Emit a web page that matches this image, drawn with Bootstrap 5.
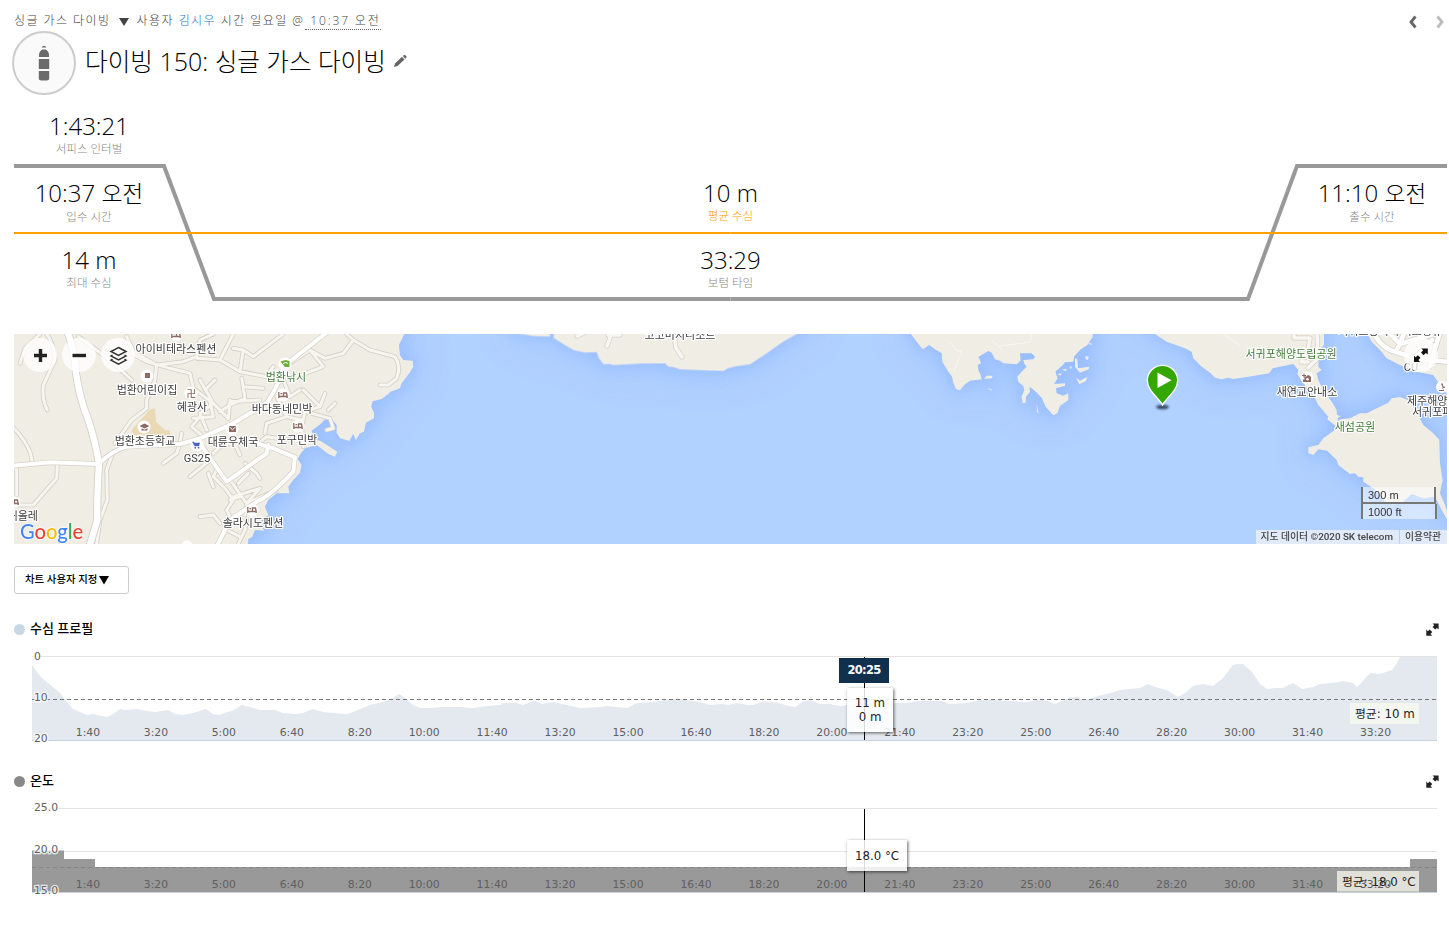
<!DOCTYPE html>
<html lang="ko">
<head>
  <meta charset="UTF-8" />
  <meta name="viewport" content="width=device-width, initial-scale=1.0" />
  <title>다이빙 150: 싱글 가스 다이빙</title>
  <link href="https://cdn.jsdelivr.net/npm/bootstrap@5.3.2/dist/css/bootstrap.min.css" rel="stylesheet" />
  <style>
    body {
      font-family: "Open Sans", "Noto Sans CJK KR", sans-serif;
      color: #000;
      background: #fff;
      overflow: hidden;
    }

    svg { display: block; }

    .page { padding: 10px 2px 0 14px; }

    /* header */
    .page-head { height: 20px; }
    .crumbs {
      height: 20px;
      line-height: 22px;
      font-size: 12px;
      font-weight: 300;
      letter-spacing: 1.45px;
      color: #444;
      white-space: nowrap;
    }
    .crumbs a { color: #1976d2; text-decoration: none; }
    .crumb-at { margin-right: 1px; }
    .crumb-time { border-bottom: 1px dotted #666; line-height: 21px; padding-left: 5px; letter-spacing: 1.85px; }

    .title-row { height: 66px; margin-left: -2px; padding-top: 1px; }
    .dive-icon {
      width: 64px;
      height: 64px;
      border: 2px solid #ccc;
      border-radius: 50%;
      background: #fafafa;
    }
    .dive-title { font-size: 25px; font-weight: 300; line-height: 60px; margin: 0 0 0 9px; white-space: nowrap; }
    .dive-title .ko { font-size: 24.6px; }
    .num { font-weight: 350; }

    /* dive summary */
    .profile { height: 201px; margin-top: 10px; }
    .profile-grid {
      display: grid;
      grid-template-columns: 150px 1fr 150px;
      grid-template-rows: repeat(3, 67px);
      height: 100%;
    }
    .stat { text-align: center; padding-top: 4px; }
    .stat-value { font-size: 24px; font-weight: 350; line-height: 32px; }
    .stat-value .ko { font-size: 22.8px; font-weight: 300; }
    .stat-label { font-size: 11.5px; font-weight: 300; line-height: 13px; color: #888; }
    .stat-label.avg { color: #ff9800; }

    /* map */
    .dive-map { height: 210px; margin-top: 27px; overflow: hidden; }
    .map-btn {
      width: 34px;
      height: 34px;
      top: 4px;
      border: 0;
      padding: 0;
      border-radius: 50%;
      background: rgba(255, 255, 255, .76);
    }
    .zoom-in { left: 9px; }
    .zoom-out { left: 48px; }
    .layers { left: 87px; }
    .map-full { left: 1390px; }
    .map-label text {
      font-family: Roboto, "Noto Sans CJK KR", sans-serif;
      font-size: 11px;
      text-anchor: middle;
      fill: #3c3c3c;
      stroke: #fff;
      stroke-width: 2.4px;
      stroke-linejoin: round;
      paint-order: stroke;
    }
    .map-label .park { fill: #3f7a35; }
    .map-label .from-left { text-anchor: start; }
    .map-label .from-right { text-anchor: end; }
    .temple { font: 500 9.5px "Noto Sans CJK KR", sans-serif; fill: #8d6b63; text-anchor: middle; }
    .google-logo {
      left: 6px;
      top: 187px;
      font: 500 20.2px/20px Lato, sans-serif;
      letter-spacing: -.1px;
      text-shadow: 0 0 2px #fff, 0 0 2px #fff, 0 0 2px #fff;
    }
    .logo-blue { color: #4285f4; }
    .logo-red { color: #ea4335; }
    .logo-yellow { color: #fbbc05; }
    .logo-green { color: #34a853; }
    .scale-bar {
      left: 1347px;
      top: 153px;
      width: 76px;
      font: 11px/17px "Liberation Sans", sans-serif;
      color: #333;
    }
    .scale-bar div {
      height: 17px;
      padding-left: 5px;
      background: rgba(255, 255, 255, .5);
      border: 2px solid #777;
      border-top: 0;
    }
    .scale-bar div:first-child { width: 75px; }
    .scale-bar div:last-child { height: 15px; border-bottom: 0; }
    .map-credit {
      right: 0;
      bottom: 0;
      height: 14px;
      font: 500 9.8px/14px Roboto, "Noto Sans CJK KR", sans-serif;
      color: #444;
      background: rgba(245, 245, 245, .7);
      white-space: nowrap;
    }
    .map-credit span { padding: 0 6px 0 5px; }
    .map-credit span + span { border-left: 1px solid #b3d1ff; }

    /* charts */
    .btn-customize {
      width: 115px;
      height: 28px;
      margin-top: 22px;
      padding: 0 0 0 10px;
      border: 1px solid #ccc;
      border-radius: 3px;
      font-size: 10.4px;
      font-weight: 500;
      color: #000;
      text-align: left;
      white-space: nowrap;
    }
    .caret-icon { margin-left: 2px; }
    .chart-head { height: 20px; padding-right: 8px; font-size: 13px; font-weight: 500; }
    .depth-head { margin-top: 25px; }
    .temp-head { margin-top: 21px; }
    .dot { width: 11px; height: 11px; border-radius: 50%; margin-right: 5px; }
    .dot-depth { background: #c7d8e4; }
    .dot-temp { background: #888; }
    .plot { height: 100px; margin-top: 11px; }
    .plot text { font: 10.8px "DejaVu Sans", sans-serif; fill: #606060; }
    .plot .x-axis text { text-anchor: middle; }
    .plot .y-axis text { stroke: #fff; stroke-opacity: .8; stroke-width: 2.5px; paint-order: stroke; }
    .plot .avg-text { font: 11.8px "DejaVu Sans", "Noto Sans CJK KR", sans-serif; fill: #222; }
    .avg-box { fill: #fafaf0; fill-opacity: .75; }
    .plot-tip, .time-tip {
      font: 11.8px/14px "DejaVu Sans", "Noto Sans CJK KR", sans-serif;
      text-align: center;
      white-space: nowrap;
      color: #222;
    }
    .plot-tip { left: 833px; background: rgba(255, 255, 255, .85); box-shadow: 1px 1px 3px rgba(0, 0, 0, .6); }
    .depth-tip { top: 38px; width: 46px; height: 44px; padding-top: 8px; }
    .temp-tip { top: 38px; width: 60px; height: 31px; line-height: 32px; }
    .time-tip {
      left: 825px;
      top: 8px;
      width: 50px;
      height: 25px;
      line-height: 25px;
      font-size: 11.5px;
      font-weight: bold;
      letter-spacing: -.7px;
      color: #fff;
      background: #10304d;
    }
  </style>
</head>
<body>

  <div class="page">
    <header class="page-head d-flex justify-content-between">
      <div class="crumbs d-flex">
        <span>싱글 가스 다이빙</span>
        <svg width="10" height="20" class="ms-2 me-2"><path d="M0 8h10L5 16z" fill="#444" /></svg>
        <span class="crumb-at">사용자 <a href="#">김시우</a> 시간 일요일 @</span><span class="crumb-time">10:37 오전</span>
      </div>
      <svg width="40" height="24" fill="none" stroke-width="2.8">
        <path d="M8.5 6.5 4 12l4.5 5.5" stroke="#666" />
        <path d="M30.5 6.5 35 12l-4.5 5.5" stroke="#bbb" />
      </svg>
    </header>

    <div class="title-row d-flex">
      <div class="dive-icon">
        <svg width="60" height="60" fill="#6b6b6b">
          <path d="M27.500 14.500q2.500-3.500 5 0zM25 24v-2q0-4 3.500-5.500h3q3.500 1.500 3.500 5.500V24zM24.800 26h10.400v10H24.800zM24.800 38h10.400v7q0 2.500-2.500 2.500h-5.400Q24.800 47.500 24.800 45z" />
        </svg>
      </div>
      <h1 class="dive-title"><span class="ko">다이빙</span> <span class="num">150:</span> <span class="ko">싱글 가스 다이빙</span></h1>
      <svg width="14" height="60" class="ms-2" fill="#666">
        <path d="M0 36 1 32.500 8 25.800 10.500 28.600 3.500 35zM8.800 25 10 24q1-.4 2 .8t.3 1.900L11.300 27.800z" />
      </svg>
    </div>

    <section class="profile position-relative">
      <svg class="position-absolute top-0 start-0" width="1433" height="201" viewBox="14 106 1433 201" fill="none">
        <path d="M14 166H164L214 299H1248L1297 166H1447" stroke="#999" stroke-width="4" />
        <path d="M14 233H1447" stroke="#ff9f00" stroke-width="2" />
        <path d="M730.500 232v2M730.500 297v4" stroke="#fff" stroke-opacity=".3" />
      </svg>
      <div class="profile-grid position-relative">
        <div class="stat">
          <div class="stat-value">1:43:21</div>
          <div class="stat-label">서피스 인터벌</div>
        </div>
        <div></div>
        <div></div>
        <div class="stat">
          <div class="stat-value">10:37 <span class="ko">오전</span></div>
          <div class="stat-label">입수 시간</div>
        </div>
        <div class="stat">
          <div class="stat-value">10 m</div>
          <div class="stat-label avg">평균 수심</div>
        </div>
        <div class="stat">
          <div class="stat-value">11:10 <span class="ko">오전</span></div>
          <div class="stat-label">출수 시간</div>
        </div>
        <div class="stat">
          <div class="stat-value">14 m</div>
          <div class="stat-label">최대 수심</div>
        </div>
        <div class="stat">
          <div class="stat-value">33:29</div>
          <div class="stat-label">보텀 타임</div>
        </div>
      </div>
    </section>

    <section class="dive-map position-relative">
      <svg width="1433" height="210" viewBox="14 334 1433 210">
        <defs>
          <filter id="shallow" x="-10%" y="-50%" width="120%" height="200%"><feGaussianBlur stdDeviation="20" /></filter>
          <filter id="near" x="-10%" y="-50%" width="120%" height="200%"><feGaussianBlur stdDeviation="7" /></filter>
          <filter id="soft" x="-30%" y="-80%" width="160%" height="260%"><feGaussianBlur stdDeviation=".8" /></filter>
          <g id="land">
            <path transform="translate(0 330) scale(.3333)" d="M0-60H1240L1213 12 1197 45 1200 75 1210 90 1238 92 1240 110 1228 130 1205 160 1200 175 1172 185 1165 192 1145 207 1118 214 1114 230 1122 248 1122 265 1098 278 1092 305 1080 310 1068 330 1060 312 1048 333 1020 325 1010 308 1010 285 1000 272 975 268 962 282 935 302 940 318 950 330 962 333 1012 365 1005 380 985 372 950 345 915 355 903 370 893 388 905 405 900 428 880 450 865 470 868 490 830 490 805 510 795 530 805 555 780 575 792 602 765 600 757 620 745 628 738 720H0z" />
            <path transform="translate(400 330) scale(.3333)" d="M340-20V8L400 18 450 20V-20zM461-20V24L490 42 520 60 555 68 590 66 597 85 610 102 630 102 640 105 720 101 795 100 805 110 820 111 840 118 900 120 970 123 985 114 1010 108 1050 103 1100 70 1150 35 1190 12 1240-20z" />
            <path transform="translate(880 330) scale(.3333)" d="M75-20 93 12 110 35 128 58 148 45 165 58 185 70 187 95 205 125 216 140 220 158 228 177 240 181 255 163 270 152 305 148 302 135 295 120 293 105 303 100 296 80 325 63 335 68 345 88 360 92 370 100 410 103 422 92 420 70 455 70 465 80 460 88 430 90 432 100 440 110 425 125 412 140 415 155 430 168 433 180 425 200 428 220 437 218 438 200 450 185 448 170 462 180 485 203 497 230 520 256 532 250 540 228 565 210 565 190 550 197 530 190 528 175 555 167 555 160 522 162 533 145 526 125 548 106 555 97 580 95 582 80 600 60 622 45 638 20 640-20z" />
            <path transform="translate(880 330) scale(.3333)" d="M312 147 320 137 338 137 335 145zM322 175 335 178 335 182zM470 220 476 252 471 245zM585 85 592 88 594 115 628 110 626 118 600 128 585 110zM588 143 600 152 622 140 618 153 598 163zM533 132 545 130 542 137zM545 119 560 116 558 123zM617 78 626 80 624 90 617 88zM568 108 576 112 572 117zM622 36 637 42 632 45z" />
            <path transform="translate(1190 330) scale(.3333)" d="M-160-20-105 12-70 35-15 55 5 65 10 85 35 110 60 128 75 143 95 148 115 143 130 147 190 138 238 130 248 115 280 108 310 102 325 120 322 132 340 160 370 195 385 225 415 260 412 268 437 288 445 280 443 265 452 258 441 255 440 240 425 215 400 180 385 150 380 130 395 120 385 110 388 60 402 45V-20z" />
            <path transform="translate(1190 330) scale(.3333)" d="M437 290 450 268 480 265 510 250 530 250 560 235 595 218 605 205 630 201 660 212 680 250 700 285 730 310 748 330 750 400 758 450 750 490 765 525 790 600 755 540 735 500 700 505 665 492 640 515 610 524 585 515 550 475 520 455 520 442 505 440 495 430 480 432 445 405 440 390 412 362 385 358 370 375 355 370 355 352 385 345 400 325 437 298zM515-20 545 35 570 60 590 85 640 110 680 125 730 135 760 180 800 220V-20z" />
          </g>
          <g id="streets">
            <path d="M42 295Q75 330 90 365L98 400M42 410 50 420V495M172 405 170 445 100 525H50M140 12Q162 40 165 90L130 165Q125 210 142 240" />
            <path d="M60 100 75 55 120 12M230 40 205 50M235 20 330 90 395 150M470 105 465 150 440 210 440 235 395 270 345 340M470 105 400 65 380 20M470 105 550 95 590 80 600 30 640 12M395 70 440 95 510 115 570 130 580 175 640 220 685 265" />
            <path d="M590 85 660 90 700 12M660 90 720 125 730 60 760 80 850 12M730 60 700 55M720 125 800 140 820 110M725 145 735 205 690 225 660 245M790 175 730 170M780 210 690 215M690 210 685 265M640 220 600 250 620 300M640 220 600 150M615 180 645 150M580 265 640 260 630 215" />
            <path d="M870 100 930 60 975 85 1030 70 1060 30 1040 12M1060 30 1110 60 1185 80Q1205 110 1190 145L1165 165 1140 165M905 135 970 110 930 60M910 180 960 230 915 245 990 265 1000 295 980 300M960 230 975 190M985 240 1005 220M915 245 905 290 910 350M850 150 870 200 900 180M830 200 860 260 800 280 795 310M860 260 905 270" />
            <path d="M545 310 540 340 530 370 490 400M610 320 575 290 600 260M625 395 570 440M640 370 660 350 690 340M625 430 640 470M650 420 640 440 675 475 700 510 680 540 690 560M720 375 700 330M735 400 770 430 780 445M690 450 740 520 830 480M745 430 715 460M700 500 780 475 740 520 735 555M690 510 720 500M770 345 800 320 870 330M600 560 640 555 660 580M680 600 720 620M735 600 740 570" />
            <path d="M340 365 320 420 322 510 300 570 290 642M735 600 715 642" />
          </g>
          <path id="highway" d="M200 0Q225 60 228 130 240 210 265 270 285 330 297 400 290 520 292 570L265 660" />
          <path id="mainroad" d="M30 408 150 397 295 402Q340 360 380 350L540 342 600 325 700 280 800 220Q840 160 850 110L990 0M600 340 680 455 800 370 805 345M740 330 820 355 885 382 880 425Q810 500 770 515L690 570 645 660" />
          <path id="lanes" d="M612 332 607 346M608 335 620 335M577 336 586 332M674 336 676 348 682 357M1308 362 1301 362 1308 350 1310 338H1294V332M1317 332 1318 358 1308 368" />
          <path id="harbour" d="M1372 330Q1380 348 1396 352L1415 358 1449 362M1396 352 1404 334M1388 332 1400 344 1440 332M1440 332 1430 366M1415 358 1432 340" />
          <path id="bed" d="M-4.200-3V3M-4.200 1.500H4.200V3M-2.500-1.300H-.800M.500 1V-2H3.500L4.200 1.500" />
        </defs>

        <rect x="14" y="334" width="1433" height="210" fill="#b1d1ff" />
        <use href="#land" fill="#86aeff" stroke="#86aeff" stroke-width="24" filter="url(#shallow)" opacity=".24" />
        <use href="#land" fill="#86aeff" stroke="#86aeff" stroke-width="24" filter="url(#near)" opacity=".4" />
        <use href="#land" fill="#f0ede5" />

        <!-- school ground -->
        <path transform="translate(0 330) scale(.3333)" fill="#ead9b5" d="M450 238 465 235 468 275 495 300 510 302V318L400 315 395 300z" />

        <!-- streets: grey casing under a pale fill -->
        <g transform="translate(0 330) scale(.3333)" fill="none" stroke-linecap="round" stroke-linejoin="round">
          <use href="#streets" stroke="#d5d0c6" stroke-width="14" />
          <use href="#streets" stroke="#f7f5f0" stroke-width="9" />
          <use href="#highway" stroke="#d5d0c6" stroke-width="24" />
          <use href="#mainroad" stroke="#d5d0c6" stroke-width="16" />
          <use href="#highway" stroke="#fff" stroke-width="19" />
          <use href="#mainroad" stroke="#fff" stroke-width="12" />
        </g>
        <g fill="none" stroke-linecap="round" stroke-linejoin="round">
          <use href="#lanes" stroke="#d5d0c6" stroke-width="5" />
          <use href="#lanes" stroke="#f8f6f2" stroke-width="3.6" />
          <use href="#harbour" stroke="#d5d0c6" stroke-width="6" />
          <use href="#harbour" stroke="#fff" stroke-width="4.5" />
          <path stroke="#f8f6f2" d="M1220 332 1240 345M950 342 956 350 962 352 958 360 954 370M992 340 1002 350M1000 346 1030 342 1032 334" />
        </g>

        <!-- places -->
        <g fill="#fff">
          <circle cx="176" cy="335" r="6" /><circle cx="147" cy="376" r="6.5" /><circle cx="191" cy="393" r="6.5" />
          <circle cx="285" cy="364" r="6.5" /><circle cx="283" cy="395" r="6.5" /><circle cx="298" cy="426" r="6.5" />
          <circle cx="144" cy="427" r="6.5" /><circle cx="232" cy="429" r="6.5" /><circle cx="197" cy="445" r="6.5" />
          <circle cx="252" cy="510" r="6.5" /><circle cx="15" cy="502" r="5.5" /><circle cx="187" cy="546" r="5.5" />
          <circle cx="1307" cy="378" r="6.5" /><circle cx="1442" cy="387" r="6" />
        </g>
        <g fill="none" stroke="#8d6b63" stroke-width="1.3">
          <use href="#bed" x="176" y="335" /><use href="#bed" x="283" y="395" /><use href="#bed" x="298" y="426" />
          <use href="#bed" x="252" y="510" /><use href="#bed" x="14" y="502" />
        </g>
        <text x="191.300" y="397" class="temple">卍</text>
        <g fill="#8d6b63">
          <path d="M145 373h5v5h-5zM229 426h7v6h-7z" />
          <path d="M139.500 426 144.500 423.500 149.500 426 144.500 428.500zM141.500 428.200 144.500 429.700 147.500 428.200V430.500H141.500z" />
          <path d="M1304.500 376.500 1306.500 376.500 1307.500 375.300H1309.500L1310 376.500H1311V382H1303V379.500H1304.500zM1302 375h4v1h-4zM1303.500 373.500h1v4h-1z" />
          <path d="M1441 383.500h2v3h2v1.500h-3l2 3M1439 390h5v1h-5z" />
        </g>
        <circle cx="1307.500" cy="379.200" r="1.300" fill="#fff" />
        <path d="M229.500 427 232.500 429.700 235.500 427" stroke="#fff" fill="none" />
        <path d="M192 441.800h1.700l.8 1h5.500l-1 3.400h-4.300zM194.500 447h1.500v1.500h-1.500zM197.800 447h1.500v1.500h-1.500z" fill="#4a63c4" />
        <path d="M280.500 361.500 285.500 360 289.500 361V367H285L282 363.500z" fill="#6fae3c" />
        <path d="M283 363.500q3-2 5 0" stroke="#fff" fill="none" />

        <g class="map-label">
          <text x="176" y="353">아이비테라스펜션</text>
          <text x="147" y="394">법환어린이집</text>
          <text x="192" y="411">혜광사</text>
          <text x="286" y="381" class="park">법환낚시</text>
          <text x="282" y="413">바다동네민박</text>
          <text x="297" y="444">포구민박</text>
          <text x="145" y="445">법환초등학교</text>
          <text x="233" y="446">대륜우체국</text>
          <text x="197" y="462">GS25</text>
          <text x="253" y="527">솔라시도펜션</text>
          <text x="38" y="519.500" class="from-right">귀올레</text>
          <text x="680" y="339">코코미지니조트</text>
          <text x="1291" y="358" class="park">서귀포해양도립공원</text>
          <text x="1307" y="396">새연교안내소</text>
          <text x="1355" y="431" class="park">새섬공원</text>
          <text x="1390" y="335">서귀포항여객 버스정류</text>
          <text x="1411" y="371">CU</text>
          <text x="1407" y="405" class="from-left">제주해양</text>
          <text x="1412" y="416" class="from-left">서귀포파</text>
        </g>

        <!-- entry marker -->
        <ellipse cx="1162.500" cy="407" rx="6.300" ry="2.300" fill="#3a4c66" filter="url(#soft)" />
        <path d="M1162.500 405C1159 398 1147.300 391 1147.300 380.500A15.200 15.200 0 0 1 1177.700 380.500C1177.700 391 1166 398 1162.500 405z" fill="#34a800" stroke="#fff" stroke-width="1.400" />
        <path d="M1157.500 372.500V388L1171.500 380.300z" fill="#fff" />
      </svg>

      <button class="map-btn zoom-in position-absolute" aria-label="확대">
        <svg width="34" height="34"><path d="M11 17.500H24M17.500 11V24" stroke="#222" stroke-width="3.4" /></svg>
      </button>
      <button class="map-btn zoom-out position-absolute" aria-label="축소">
        <svg width="34" height="34"><path d="M10.500 17.500H24" stroke="#222" stroke-width="3.4" /></svg>
      </button>
      <button class="map-btn layers position-absolute" aria-label="레이어">
        <svg width="34" height="34" fill="none" stroke="#333" stroke-width="1.5">
          <path d="M17.500 9.500 25 13.500 17.500 17.500 10 13.500zM11.500 17 10 18l7.500 4L25 18l-1.500-1M11.500 21.200 10 22.200l7.500 4 7.500-4-1.500-1" />
        </svg>
      </button>
      <button class="map-btn map-full position-absolute" aria-label="전체 화면">
        <svg width="34" height="34" fill="#111">
          <path d="M17.200 10.500H23.800V16.500L21.800 15 19.600 17.200 17 14.500 19.200 12.300zM10 17.800 11.700 19.300 13.800 17.200 16.500 19.800 14.400 22 16 24H10z" />
        </svg>
      </button>

      <div class="google-logo position-absolute"><span class="logo-blue">G</span><span class="logo-red">o</span><span class="logo-yellow">o</span><span class="logo-blue">g</span><span class="logo-green">l</span><span class="logo-red">e</span></div>

      <div class="scale-bar position-absolute">
        <div>300 m</div>
        <div>1000 ft</div>
      </div>
      <div class="map-credit position-absolute d-flex"><span>지도 데이터 ©2020 SK telecom</span><span>이용약관</span></div>
    </section>

    <button class="btn btn-customize d-flex align-items-center">
      차트 사용자 지정
      <svg width="10" height="10" class="caret-icon"><path d="M0 1h10L5 9.500z" /></svg>
    </button>

    <div class="chart-head depth-head d-flex align-items-center">
      <span class="dot dot-depth"></span>수심 프로필
      <svg width="13" height="13" class="ms-auto" fill="#222"><path d="M6.500 .500H12.600V6.400L10.900 4.900 9.200 6.600 6.500 4 8.300 2.300zM.300 6.600 1.900 8.200 3.600 6.400 6.300 9 4.500 10.900 6.300 12.700H.300z" /></svg>
    </div>
    <div class="plot position-relative">
      <svg width="1433" height="100" viewBox="14 650 1433 100">
        <path d="M32 656.500H1437" stroke="#e3e3e3" />
        <path fill="#e3e9ef" d="M32 740V665L37 672 42 678 48 683 53 687 60 693 67 702 73 709 80 712 87 715 93 714 107 717 113 714 120 709 125 710 137 709 147 711 155 712 168 710 175 714 183 715 193 713 206 709 213 714 219 715 227 712 232 711 242 705 250 707 260 710 275 710 283 713 295 714 303 713 313 709 323 712 333 713 348 714 358 710 370 705 383 702 393 698 399 694 405 698 413 705 420 708 430 708 443 707 460 707 473 708 487 706 500 705 503 703 515 702.500 523 705 535 700.500 542 704 553 702 567 705 580 708 600 707 607 706 627 708 637 703 653 702 667 700 677 698.500 687 700 700 702 710 705 722 704 728 705 737 703 747 705 753 705 763 701.500 777 702.500 787 705.500 795 707 803 701.500 810 700 820 704 830 704 840 706 847 705 865 703 893 703 907 703 917 701 942 701 950 704 967 703 980 700 993 699.500 1008 701 1027 702 1037 700 1043 699 1055 704 1062 701 1070 697.500 1078 696.500 1082 700 1090 699 1100 695.500 1110 693 1120 690 1130 689 1140 688 1148 684 1155 687 1167 690 1178 697 1185 693 1193 686 1203 684 1213 686 1223 678 1233 665 1238 664 1243 664 1252 672 1260 684 1267 689 1275 688 1283 688 1293 683 1302 689 1313 687 1320 684 1333 683 1343 681 1353 683 1357 687 1362 682 1370 673 1380 674 1392 670 1397 663 1400 657H1437V740z" />
        <path d="M32 740.500H1437" stroke="#c5d3e4" />
        <path d="M32 699.500H1437" stroke="#777" stroke-dasharray="4 3" />
        <rect x="1350" y="703" width="69" height="21" class="avg-box" />
        <g class="x-axis" data-y="736"></g>
        <g class="y-axis"><text x="34" y="659.500">0</text><text x="34" y="701">10</text><text x="34" y="742">20</text></g>
        <text x="1355" y="718" class="avg-text">평균: 10 m</text>
        <path d="M864.500 657V740" stroke="#000" />
      </svg>
      <div class="time-tip position-absolute">20:25</div>
      <div class="plot-tip depth-tip position-absolute">11 m<br />0 m</div>
    </div>

    <div class="chart-head temp-head d-flex align-items-center">
      <span class="dot dot-temp"></span>온도
      <svg width="13" height="13" class="ms-auto" fill="#222"><path d="M6.500 .500H12.600V6.400L10.900 4.900 9.200 6.600 6.500 4 8.300 2.300zM.300 6.600 1.900 8.200 3.600 6.400 6.300 9 4.500 10.900 6.300 12.700H.300z" /></svg>
    </div>
    <div class="plot position-relative">
      <svg width="1433" height="100" viewBox="14 802 1433 100">
        <path d="M32 808.500H1437M32 851.500H1437" stroke="#e3e3e3" />
        <path fill="#999" d="M32 892V850.500H64V859H95V867H1410V859H1437V892z" />
        <path d="M32 892.500H1437" stroke="#c5d3e4" />
        <path d="M32 867.500H1437" stroke="#858585" stroke-dasharray="4 3" />
        <rect x="1337" y="871" width="82" height="20.500" class="avg-box" />
        <g class="x-axis" data-y="888"></g>
        <g class="y-axis"><text x="34" y="811">25.0</text><text x="34" y="853">20.0</text><text x="34" y="894">15.0</text></g>
        <text x="1342" y="886" class="avg-text">평균: 18.0 °C</text>
        <path d="M864.500 809V892" stroke="#000" />
      </svg>
      <div class="plot-tip temp-tip position-absolute">18.0 °C</div>
    </div>
  </div>

  <script src="https://cdn.jsdelivr.net/npm/bootstrap@5.3.2/dist/js/bootstrap.bundle.min.js"></script>
  <script>
    // one time label every 100 seconds, about 68px apart
    document.querySelectorAll('.x-axis').forEach(axis => {
      for (let i = 1; i <= 20; i++) {
        const seconds = i * 100;
        // two-digit minutes sit half a digit further left
        const shift = seconds >= 600 ? -3.5 : 0;
        const label = document.createElementNS('http://www.w3.org/2000/svg', 'text');
        label.setAttribute('x', 20 + i * 67.95 + shift);
        label.setAttribute('y', axis.dataset.y);
        label.textContent = Math.floor(seconds / 60) + ':' + String(seconds % 60).padStart(2, '0');
        axis.appendChild(label);
      }
    });
  </script>
</body>
</html>
